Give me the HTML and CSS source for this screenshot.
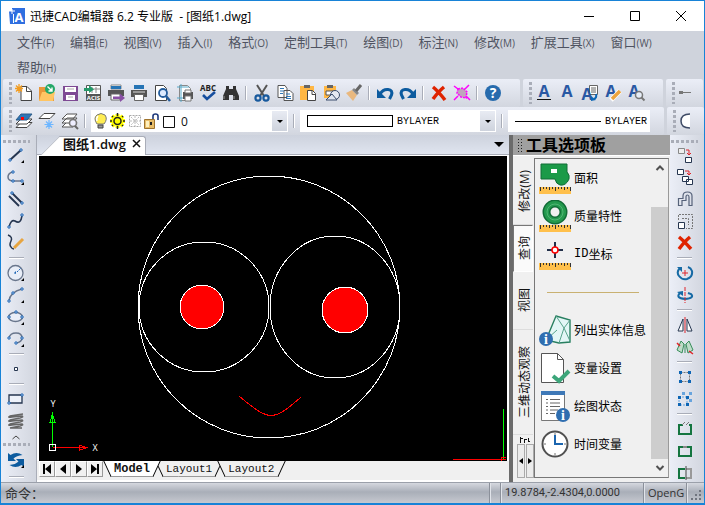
FILE: index.html
```
<!DOCTYPE html>
<html lang="zh-Hans">
<head>
<meta charset="UTF-8" />
<meta name="viewport" content="width=device-width,initial-scale=1.0" />
<title>迅捷CAD编辑器 6.2 专业版</title>
<link rel="stylesheet" href="styles.css">
</head>
<body>
  <header class="titlebar">
    <svg class="logo" viewBox="0 0 16 16"><path d="M3 0h13v16H3z" fill="#2f6fe0"/><path d="M0 3h3v13H1z" fill="#2f6fe0"/><path d="M3 1v5M0 3h6M4.500 15V6" stroke="#fff" stroke-width="1"/><text x="10" y="14" font-size="13" font-weight="700" text-anchor="middle" fill="#fff">A</text></svg>
    <h1>迅捷CAD编辑器 6.2 专业版 &nbsp;- [图纸1.dwg]</h1>
    <button class="win" aria-label="最小化"><svg viewBox="0 0 12 12"><path d="M1 6.500h10"/></svg></button>
    <button class="win" aria-label="最大化"><svg viewBox="0 0 12 12"><path d="M1.500 1.500h9v9h-9z"/></svg></button>
    <button class="win" aria-label="关闭"><svg viewBox="0 0 12 12"><path d="M1 1l10 10M11 1L1 11"/></svg></button>
  </header>

  <nav class="menubar">
    <a href="#">文件<small>(F)</small></a>
    <a href="#">编辑<small>(E)</small></a>
    <a href="#">视图<small>(V)</small></a>
    <a href="#">插入<small>(I)</small></a>
    <a href="#">格式<small>(O)</small></a>
    <a href="#">定制工具<small>(T)</small></a>
    <a href="#">绘图<small>(D)</small></a>
    <a href="#">标注<small>(N)</small></a>
    <a href="#">修改<small>(M)</small></a>
    <a href="#">扩展工具<small>(X)</small></a>
    <a href="#">窗口<small>(W)</small></a>
    <a href="#">帮助<small>(H)</small></a>
  </nav>

  <div class="toolrow">
    <div class="bar">
      <i class="grip"></i>
      <button aria-label="新建"><svg viewBox="0 0 20 20"><path d="M7 3.500h6l4.500 4.500v9.500H7z" fill="#fff" stroke="#444"/><path d="M12.500 3.500v5h5" fill="none" stroke="#444"/><path d="M5 1v9M1 5.500h8M2 2.500l6 6M8 2.500l-6 6" stroke="#f39c1f" stroke-width="1.300"/></svg></button>
      <button aria-label="打开"><svg viewBox="0 0 20 20"><path d="M2 4h6l2 2h7v12H2z" fill="#e9973a"/><path d="M5 9h13l-2 9H2z" fill="#ffc563"/><circle cx="13" cy="6" r="5" fill="#24a869"/><path d="M10.500 3.500l4.500 4.500M15 4.500V8h-3.500" fill="none" stroke="#fff" stroke-width="1.400"/></svg></button>
      <button aria-label="保存"><svg viewBox="0 0 20 20"><path d="M3 3h15v15H3z" fill="#7e4a94"/><path d="M5 4h11v5H5zM6 12h9v5H6z" fill="#fff"/><path d="M7 6h7M8 14h5" stroke="#aaa"/></svg></button>
      <button aria-label="输入"><svg viewBox="0 0 20 20"><path d="M3.500 2.500h14v15h-14z" fill="#fff" stroke="#555"/><path d="M9 4v6M13 4v6M9 6h8" stroke="#888"/><path d="M3 11h15v7H3z" fill="#555"/><text x="10.500" y="17" font-size="6" font-weight="700" text-anchor="middle" fill="#fff">ACIS</text><path d="M1 5h5V2l5 4.500L6 10V8H1z" fill="#25996a"/></svg></button>
      <button aria-label="输出"><svg viewBox="0 0 20 20"><path d="M5 2h10v4H5z" fill="#fff" stroke="#888"/><path d="M5 3h10v3H5z" fill="#2674b5"/><path d="M2 7h16v6H2z" fill="#555"/><path d="M5 11h9v6H5z" fill="#fff" stroke="#666"/><path d="M7 13.500h7v-3l5 4.500-5 4v-3H7z" fill="#8950a5"/></svg></button>
      <button aria-label="打印"><svg viewBox="0 0 20 20"><path d="M5 2h10v4H5z" fill="#2674b5"/><path d="M2 7h16v7H2z" fill="#555"/><path d="M5.500 11.500h9v6h-9z" fill="#fff" stroke="#666"/><path d="M4 9h12" stroke="#ddd"/></svg></button>
      <button aria-label="打印预览"><svg viewBox="0 0 20 20"><path d="M3.500 2.500h8l3 3v12h-11z" fill="#fff" stroke="#444"/><circle cx="11" cy="10" r="4" fill="#dceaff" stroke="#245c9c" stroke-width="1.800"/><path d="M14 13l4 5" stroke="#245c9c" stroke-width="2.500"/></svg></button>
      <button aria-label="页面设置"><svg viewBox="0 0 20 20"><path d="M4.500 2.500h8l3 3v12h-11z" fill="#fff" stroke="#888"/><path d="M6 1v18M2 4h12M2 15h8" stroke="#56a9c9"/><path d="M8 9h10v7H8z" fill="#555"/><path d="M10 7h6v3h-6zM10 13h6v5h-6z" fill="#fff" stroke="#777"/></svg></button>
      <button aria-label="拼写检查"><svg viewBox="0 0 20 20"><text x="10" y="7.500" font-size="8" font-weight="700" text-anchor="middle" fill="#222">ABC</text><path d="M5 12l4 4 8-7" fill="none" stroke="#174f9f" stroke-width="2.600"/></svg></button>
      <button aria-label="查找"><svg viewBox="0 0 20 20"><path d="M5 3h3v3h4V3h3v3l3 7v4h-6v-5H8v5H2v-4l3-7z" fill="#333"/><path d="M3 13v3M13 13v3" stroke="#999"/></svg></button>
      <i class="sep"></i>
      <button aria-label="剪切"><svg viewBox="0 0 20 20"><path d="M5 2l7 11M15 2L8 13" stroke="#555" stroke-width="2"/><g fill="none" stroke="#17599d" stroke-width="2.200"><circle cx="6" cy="15" r="2.600"/><circle cx="14" cy="15" r="2.600"/></g></svg></button>
      <button aria-label="复制"><svg viewBox="0 0 20 20"><path d="M3 2.500h7l2 3v9H3zM9 7.500h6l3 3v7H9z" fill="#fff" stroke="#555"/><path d="M5 5.500h4M5 8h4M5 10.500h3M11 11h4M11 13.500h5M11 15.500h5" stroke="#2f78b8"/></svg></button>
      <button aria-label="粘贴"><svg viewBox="0 0 20 20"><path d="M2 3h14v14H2z" fill="#ffb744"/><path d="M6 2h6v3H6z" fill="#666"/><path d="M9.500 7.500h5l3 3v7h-8z" fill="#fff" stroke="#444"/><path d="M14 7.500v4h4" fill="none" stroke="#444"/></svg></button>
      <button aria-label="粘贴为块"><svg viewBox="0 0 20 20"><path d="M3 3h12v12H3z" fill="#ffb744"/><path d="M6 2h6v3H6z" fill="#666"/><path d="M5 8h9v4H5z" fill="#fff" stroke="#555"/><circle cx="14" cy="12" r="4.500" fill="#e6eaf2" stroke="#3b4d6c"/><path d="M5 17l6-6 5 6z" fill="#dfe5ef" stroke="#3b4d6c"/></svg></button>
      <button aria-label="特性匹配"><svg viewBox="0 0 20 20"><path d="M2 10l6-3 5 5-4 6z" fill="#e9b87e"/><path d="M8 7l5 5 2-2-5-5z" fill="#888"/><path d="M12 8l5-6" stroke="#666" stroke-width="3"/></svg></button>
      <i class="sep"></i>
      <button aria-label="放弃"><svg viewBox="0 0 20 20"><path d="M5 11q3-5 8-4.500t3.500 5.500l-2 4" fill="none" stroke="#0c5b9f" stroke-width="3"/><path d="M2 6v9h9z" fill="#0c5b9f"/></svg></button>
      <button aria-label="重做"><svg viewBox="0 0 20 20"><path d="M15 11q-3-5-8-4.500t-3.500 5.500l2 4" fill="none" stroke="#0c5b9f" stroke-width="3"/><path d="M18 6v9H9z" fill="#0c5b9f"/></svg></button>
      <i class="sep"></i>
      <button aria-label="删除"><svg viewBox="0 0 20 20"><path d="M4 4q5 4 12 13M15 4q-5 4-11 12" fill="none" stroke="#df2300" stroke-width="3.500"/></svg></button>
      <button aria-label="清理"><svg viewBox="0 0 20 20"><path d="M6 6l5-1 4 4-1 6-5-1-4-4z" fill="#c0a5bd" stroke="#f0f" stroke-dasharray="2 1" stroke-width="1.500"/><path d="M2 3l4 3M17 2l-4 4M2 17l4-4M18 17l-4-4" stroke="#f0f" stroke-width="1.500"/></svg></button>
      <i class="sep"></i>
      <button aria-label="帮助"><svg viewBox="0 0 20 20"><circle cx="10" cy="10" r="8" fill="#276bad"/><text x="10" y="15" font-size="14" font-weight="700" text-anchor="middle" fill="#fff">?</text></svg></button>
    </div>
    <div class="bar">
      <i class="grip"></i>
      <button aria-label="多行文字"><svg class="letter" viewBox="0 0 20 20"><text x="10" y="14">A</text><path d="M3 16.500h14" stroke="#111"/></svg></button>
      <button aria-label="单行文字"><svg class="letter" viewBox="0 0 20 20"><text x="10" y="14">A</text></svg></button>
      <button aria-label="文字样式"><svg class="letter" viewBox="0 0 20 20"><path d="M9.500 2.500h8v9h-8z" fill="#fff" stroke="#666"/><path d="M11 5h5M11 7h5M11 9h5" stroke="#666"/><text x="7" y="17">A</text><path d="M16 11q1 4-2 5" fill="none" stroke="#0c66b4" stroke-width="2"/><path d="M11 18v-5l5 4z" fill="#0c66b4"/></svg></button>
      <button aria-label="编辑文字"><svg class="letter" viewBox="0 0 20 20"><text x="8" y="14">A</text><path d="M8 17l9-9" stroke="#fff" stroke-width="5"/><path d="M9 16l8-8" stroke="#eda43c" stroke-width="3.500"/></svg></button>
      <button aria-label="查找文字"><svg class="letter" viewBox="0 0 20 20"><text x="8" y="14">A</text><circle cx="13" cy="12" r="3.500" fill="#e6edf7" stroke="#777" stroke-width="1.500"/><path d="M15.500 14.500l3 3" stroke="#777" stroke-width="2"/></svg></button>
    </div>
    <div class="bar bar-last">
      <i class="grip"></i>
      <button aria-label="追踪点"><svg viewBox="0 0 20 20"><path d="M3 9.500h11" stroke="#777"/><path d="M2 8h4v3H2z" fill="#777"/></svg></button>
    </div>
  </div>

  <div class="toolrow">
    <div class="bar bar-wide">
      <i class="grip"></i>
      <button aria-label="图层"><svg viewBox="0 0 20 20"><path d="M7 11.500h11l-5 5H2z" fill="#fff" stroke="#444"/><path d="M7 8h11l-5 5H2z" fill="#fff" stroke="#444"/><path d="M7 3h11l-5 6H2z" fill="#2d75b6" stroke="#2d5c88"/><path d="M7 6h3v3H7z" fill="red"/></svg></button>
      <button aria-label="冻结图层"><svg viewBox="0 0 20 20"><path d="M7 2.500h11l-5 5H2z" fill="#fff" stroke="#444"/><path d="M12 9v9M7.500 13.500h9M9 10.500l6 6M15 10.500l-6 6" stroke="#6db6ff" stroke-width="1.200"/></svg></button>
      <button aria-label="图层浏览"><svg viewBox="0 0 20 20"><path d="M7 11h10l-4 5H2z" fill="#fff" stroke="#555"/><path d="M7 7h10l-4 5H2zM7 3h10l-4 5H2z" fill="#fff" stroke="#555"/><circle cx="13" cy="12" r="3.500" fill="#eef" stroke="#777" stroke-width="1.600"/><path d="M15 15l3 3" stroke="#666" stroke-width="2"/></svg></button>
      <i class="sep"></i>
      <div class="combo combo-layer">
        <svg viewBox="0 0 17 18"><path d="M5 12Q1 6 5 3q4-3 8 0 3 4-1 9z" fill="#ffed52" stroke="#777"/><path d="M6 4q-2 2-1 5" fill="none" stroke="#fff" stroke-width="1.500"/><path d="M6 13h5v3H6z" fill="#999" stroke="#444"/></svg>
        <svg viewBox="0 0 17 18"><path d="M8.500 2v14M1 9h15M3 4l11 10M14 4L3 14" stroke="#ff0" stroke-width="4"/><circle cx="8.500" cy="9" r="3.500" fill="#ff0" stroke="#222" stroke-width="1.500"/><path d="M8.500 1v3M8.500 14v3M1 9h2M14 9h2M3 4l1 1M13 13l1 1M14 4l-1 1M3 14l1-1" stroke="#222" stroke-width="1.500"/></svg>
        <svg viewBox="0 0 17 18"><path d="M3.500 3.500h11v11h-11z" fill="none" stroke="#aaa" stroke-dasharray="2 1"/><path d="M9 4v10M4 9h10M5 5l8 8M13 5l-8 8" stroke="#bbb" stroke-dasharray="2 1"/></svg>
        <svg viewBox="0 0 17 18"><path d="M10 8V4q0-2 2.500-2T15 4v4" fill="none" stroke="#1e397a" stroke-width="1.600"/><path d="M1.500 7.500h10v9h-10z" fill="#e8bd69" stroke="#9e732e"/><path d="M3 9h3v6H3z" fill="#fff0bd"/><path d="M8 10v3" stroke="#222" stroke-width="2"/></svg>
        <svg viewBox="0 0 17 18"><path d="M3.500 4.500h11v11h-11z" fill="#fff" stroke="#111"/></svg>
        <select aria-label="当前图层"><option>0</option></select>
        <span class="arrow"></span>
      </div>
      <i class="sep"></i>
      <div class="combo">
        <span class="swatch"></span>
        <select class="mono" aria-label="颜色"><option>BYLAYER</option></select>
        <span class="arrow"></span>
      </div>
      <i class="sep"></i>
      <div class="combo combo-line">
        <span class="linetype"></span>
        <select class="mono" aria-label="线型"><option>BYLAYER</option></select>
      </div>
    </div>
    <div class="bar bar-last">
      <i class="grip"></i>
      <button aria-label="圆弧"><svg viewBox="0 0 20 20"><path d="M12 3q-9 0-9 7t9 7z" fill="#fff"/><path d="M12 3q-9 0-9 7t9 7" fill="none" stroke="#3e4b66" stroke-width="1.500"/></svg></button>
    </div>
  </div>

  <main class="work">
    <div class="side">
      <i class="grip-h"></i>
      <button aria-label="直线"><svg viewBox="0 0 20 20"><path d="M4 15L15 5" stroke="#263650" stroke-width="2"/><path class="node" d="M3 14h2v2H3zM14 4h2v2h-2z"/><path d="M18 15v3h-3z"/></svg></button>
      <button aria-label="多段线"><svg viewBox="0 0 20 20"><path d="M7 5q-5 1-5 5t6 4h7" fill="none" stroke="#69768c" stroke-width="1.500"/><path class="node" d="M6 4h2v2H6zM6 13h2v2H6zM15 13h2v2h-2z"/><path d="M18 15v3h-3z"/></svg></button>
      <button aria-label="多线"><svg viewBox="0 0 20 20"><path d="M3 7l10 10M6 4l10 10" stroke="#263650" stroke-width="1.800"/><path class="node" d="M5 3h2v2H5zM15 13h2v2h-2z"/></svg></button>
      <button aria-label="样条曲线"><svg viewBox="0 0 20 20"><path d="M3 16q2-8 6-6 6 4 7-6" fill="none" stroke="#263650" stroke-width="1.600"/><path class="node" d="M2 15h2v2H2zM15 3h2v2h-2z"/></svg></button>
      <button aria-label="徒手画"><svg viewBox="0 0 20 20"><path d="M2 2q5 2 3 6t0 6q1 2 3 2" fill="none" stroke="#263650" stroke-width="1.500"/><path d="M8 15l9-9" stroke="#e7a541" stroke-width="3"/></svg></button>
      <i class="sep-h"></i>
      <button aria-label="圆"><svg viewBox="0 0 20 20"><circle cx="9.500" cy="10" r="7.500" fill="#e9eef8" stroke="#69768c" stroke-width="1.300"/><path d="M8 10h3M9.500 8.500v3M11 9l4-4" stroke="#1d65b5" stroke-dasharray="2 1"/><path d="M18 15v3h-3z"/></svg></button>
      <button aria-label="圆弧"><svg viewBox="0 0 20 20"><path d="M3 16q1-9 13-12" fill="none" stroke="#69768c" stroke-width="1.500"/><path class="node" d="M2 15h2v2H2zM6 7h2v2H6zM15 3h2v2h-2z"/><path d="M18 15v3h-3z"/></svg></button>
      <button aria-label="椭圆"><svg viewBox="0 0 20 20"><ellipse cx="9.500" cy="10" rx="7" ry="4.500" fill="#e9eef8" stroke="#69768c" stroke-width="1.500"/><path class="node" d="M2 9h2v2H2zM9 4h2v2H9zM15 9h2v2h-2z"/><path d="M18 15v3h-3z"/></svg></button>
      <button aria-label="椭圆弧"><svg viewBox="0 0 20 20"><path d="M3 9q1-5 7-5t6 5q0 4-6 5" fill="none" stroke="#69768c" stroke-width="1.500"/><path class="node" d="M2 8h2v2H2zM15 8h2v2h-2zM9 13h2v2H9z"/><path d="M18 15v3h-3z"/></svg></button>
      <i class="sep-h"></i>
      <button aria-label="点"><svg viewBox="0 0 20 20"><path d="M8.500 8.500h3v3h-3z" fill="#fff" stroke="#263650"/></svg></button>
      <i class="sep-h"></i>
      <button aria-label="矩形"><svg viewBox="0 0 20 20"><path d="M3 6h13v8H3z" fill="#eef2fa" stroke="#263650" stroke-width="1.300"/><path class="node" d="M2 13h2v2H2zM15 5h2v2h-2z"/></svg></button>
      <button aria-label="螺旋"><svg viewBox="0 0 20 20"><path d="M17 3L4 5q-3 2 2 1l10-1q2 1-2 2L4 9q-3 2 2 1l10-1q2 1-2 2L4 13q-3 2 2 1l10-1q2 1-2 2L4 17l12 0" fill="none" stroke="#666" stroke-width="1.500"/></svg></button>
      <button class="more" aria-label="更多"><svg viewBox="0 0 20 10"><path d="M6.500 7L10 4l3.500 3" fill="none" stroke="#444"/></svg></button>
      <i class="grip-h"></i>
      <button class="regen" aria-label="重生成"><svg viewBox="0 0 20 20"><path d="M2 3v8h8L7.500 8.500q3-3 9-3.500-6-4-12 0z" fill="#0c5b9f"/><path d="M18 17V9h-8l2.500 2.500q-3 3-9 3.500 6 4 12 0z" fill="#0c5b9f"/><path d="M18 15v3h-3z"/></svg></button>
      <i class="sep-h"></i>
    </div>

    <section class="doc">
      <div class="doctabs">
        <button class="doctab">图纸1.dwg<svg viewBox="0 0 10 10"><path d="M1 1l7 7M8 1L1 8" stroke="#111" stroke-width="1.500"/></svg></button>
        <button class="doclist" aria-label="图纸列表"><span></span></button>
      </div>
      <div class="canvas">
        <svg class="drawing">
          <g fill="none" stroke="#fff">
            <circle cx="230" cy="151" r="131"/>
            <circle cx="165" cy="151" r="65"/>
            <ellipse cx="296" cy="151" rx="65" ry="71"/>
            <circle cx="163" cy="151" r="22" fill="red"/>
            <circle cx="306" cy="154" r="23" fill="red"/>
          </g>
          <path d="M200 240Q213 251 221 256 233 263 243 256 251 251 262 241" fill="none" stroke="red"/>
          <!-- UCS icon -->
          <path d="M13.500 291v-33M11 266l2.500-8 2.500 8z" fill="none" stroke="#0f0"/>
          <path d="M14 291.500h34M40 289l8 2.500-8 3z" fill="none" stroke="red"/>
          <path d="M10.500 288.500h6v6h-6z" fill="none" stroke="#fff"/>
          <text x="14" y="251" font-size="9" text-anchor="middle" fill="#fff">Y</text>
          <text x="56" y="295" font-size="9" text-anchor="middle" fill="#fff">X</text>
          <!-- crosshair -->
          <path d="M464.500 253v51" stroke="#0f0"/>
          <path d="M414 303.500h53M462 301h5M462 301v4" fill="none" stroke="red"/>
        </svg>
      </div>
      <div class="sheets">
        <button class="nav" aria-label="第一个"><svg viewBox="0 0 12 12"><path d="M2 1h2v10H2zM10 1v10L4 6z"/></svg></button>
        <button class="nav" aria-label="上一个"><svg viewBox="0 0 12 12"><path d="M9 1v10L3 6z"/></svg></button>
        <button class="nav" aria-label="下一个"><svg viewBox="0 0 12 12"><path d="M3 1v10l6-5z"/></svg></button>
        <button class="nav" aria-label="最后一个"><svg viewBox="0 0 12 12"><path d="M2 1v10l6-5zM8 1h2v10H8z"/></svg></button>
        <button class="sheet on">Model</button>
        <button class="sheet">Layout1</button>
        <button class="sheet">Layout2</button>
      </div>
    </section>

    <aside class="palette">
      <h2><i class="dots"></i>工具选项板</h2>
      <div class="palette-body">
        <div class="vtabs">
          <button class="vtab t1"><span>修改(M)</span></button>
          <button class="vtab t2 on"><span>查询</span></button>
          <button class="vtab t3"><span>视图</span></button>
          <button class="vtab t4"><span>三维动态观察</span></button>
          <button class="vtab rest" aria-label="编辑"><svg viewBox="0 0 12 6"><path d="M1.500 0v6M1 1.500h3M5.500 2v4M5 2.500h3M9.500 1v3M9 4.500h2" fill="none" stroke="#111"/></svg></button>
          <div class="vscroll">
            <button aria-label="前移"><svg viewBox="0 0 6 8"><path d="M5 1v6L1 4z"/></svg></button>
            <button aria-label="后移"><svg viewBox="0 0 6 8"><path d="M1 1v6l4-3z"/></svg></button>
          </div>
        </div>
        <div class="list">
          <div class="items">
            <button class="item"><svg viewBox="0 0 32 32"><path d="M2 2h26v8q3 3 2 7-3 7-9 6-4-1-5-6H2z" fill="#1b9a48" stroke="#126c37"/><path d="M12 7h6v4h-6z" fill="#fff"/><path d="M0 25h32v7H0z" fill="#ffc04c"/><path d="M1.500 25v4M4.500 25v2M7.500 25v2M10.500 25v3M13.500 25v2M16.500 25v4M19.500 25v2M22.500 25v2M25.500 25v3M28.500 25v2M31.500 25v4" stroke="#333"/></svg>面积</button>
            <button class="item"><svg viewBox="0 0 32 32"><circle cx="16" cy="12" r="8.500" fill="none" stroke="#126c37" stroke-width="8"/><circle cx="16" cy="12" r="8.500" fill="none" stroke="#249a4e" stroke-width="5"/><circle cx="16" cy="12" r="8" fill="none" stroke="#52b575" stroke-width="1"/><path d="M0 25h32v7H0z" fill="#ffc04c"/><path d="M1.500 25v4M4.500 25v2M7.500 25v2M10.500 25v3M13.500 25v2M16.500 25v4M19.500 25v2M22.500 25v2M25.500 25v3M28.500 25v2M31.500 25v4" stroke="#333"/></svg>质量特性</button>
            <button class="item"><svg viewBox="0 0 32 32"><path d="M16 4v16M8 12h16" stroke="#222f49" stroke-width="2"/><circle cx="16" cy="12" r="3" fill="#fff" stroke="red" stroke-width="1.500"/><path d="M0 25h32v7H0z" fill="#ffc04c"/><path d="M1.500 25v4M4.500 25v2M7.500 25v2M10.500 25v3M13.500 25v2M16.500 25v4M19.500 25v2M22.500 25v2M25.500 25v3M28.500 25v2M31.500 25v4" stroke="#333"/></svg><b>ID</b>坐标</button>
            <hr>
            <button class="item"><svg viewBox="0 0 32 32"><path d="M17 2l14 4v22l-11 1-13-3z" fill="#e3f6f6" stroke="#287f60" stroke-width="1.400"/><path d="M17 2l8 12 6-8M25 14l-5 15M25 14l6 13M8 25l10-9" fill="none" stroke="#59a38c"/><circle cx="7" cy="25" r="7" fill="#2f6eb0"/><text class="info" x="7" y="30">i</text></svg>列出实体信息</button>
            <button class="item"><svg viewBox="0 0 32 32"><path d="M2.500 1.500h16l6 6v23h-22z" fill="#fff" stroke="#555"/><path d="M18.500 1.500v6h6" fill="none" stroke="#555"/><path d="M14 24l6 5 10-10" fill="none" stroke="#3ca67a" stroke-width="4"/></svg>变量设置</button>
            <button class="item"><svg viewBox="0 0 32 32"><path d="M2.500 2.500h23v28h-23z" fill="#fff" stroke="#777"/><path d="M2 1h24v4H2z" fill="#3e78b7"/><path d="M7 9.500h2M11 9.500h10M7 13h2M11 13h10M7 16.500h2M11 16.500h10M7 20h2M11 20h8M7 23.500h2M11 23.500h5" stroke="#666"/><circle cx="24" cy="25" r="7" fill="#2f6eb0"/><text class="info" x="24" y="30">i</text></svg>绘图状态</button>
            <button class="item"><svg viewBox="0 0 32 32"><circle cx="16" cy="16" r="12.500" fill="#fff" stroke="#505050" stroke-width="2"/><path d="M16 7v9h8" fill="none" stroke="#1b65af" stroke-width="2"/><path d="M16 5v2M27 16h-2M16 27v-2M5 16h2" stroke="#777"/></svg>时间变量</button>
          </div>
          <div class="scroll">
            <button aria-label="向上"><svg viewBox="0 0 10 10"><path d="M1.500 7L5 3.500 8.500 7" fill="none" stroke="#505050" stroke-width="2"/></svg></button>
            <span class="thumb"></span>
            <button aria-label="向下"><svg viewBox="0 0 10 10"><path d="M1.500 3L5 6.500 8.500 3" fill="none" stroke="#505050" stroke-width="2"/></svg></button>
          </div>
        </div>
      </div>
    </aside>

    <div class="side side-right">
      <i class="grip-h"></i>
      <button aria-label="复制"><svg viewBox="0 0 20 20"><path d="M3.500 3.500h6v5h-6z" fill="#eee" stroke="#888"/><path d="M10.500 12.500h6v5h-6z" fill="#fff" stroke="#263650"/><path d="M11 5h3v5M12 8l2 2 2-2" fill="none" stroke="#e0252a"/></svg></button>
      <button aria-label="多重复制"><svg viewBox="0 0 20 20"><path d="M2.500 2.500h6v5h-6zM7.500 9.500h6v5h-6zM11.500 12.500h6v5h-6z" fill="#fff" stroke="#263650"/><path d="M10 4h4v4M12 6l2 2 2-2" fill="none" stroke="#e0252a"/></svg></button>
      <button aria-label="偏移"><svg viewBox="0 0 20 20"><path d="M3.500 10V17M3 16.500h4v-5h4V8q0-2 1.500-2T14 8v8.500h3V7q0-4-4.500-4T8 7v2.500H3.500V12" fill="none" stroke="#56627a" stroke-width="1.200"/></svg></button>
      <button aria-label="缩放"><svg viewBox="0 0 20 20"><path d="M3.500 9V3.500h14v14H11" fill="none" stroke="#777" stroke-dasharray="2 1"/><path d="M7 7.500h6.500V14" fill="none" stroke="#777" stroke-dasharray="2 1"/><path d="M3.500 11.500h6v6h-6z" fill="#fff" stroke="#263650"/></svg></button>
      <button aria-label="删除"><svg viewBox="0 0 20 20"><path d="M4 4q5 4 12 12M15 4q-5 4-11 12" fill="none" stroke="#df2300" stroke-width="3.500"/></svg></button>
      <i class="sep-h"></i>
      <button aria-label="旋转"><svg viewBox="0 0 20 20"><path d="M5 5q-4 4-1 8 3 4 8 3 6-2 5-8-1-3-4-4" fill="none" stroke="#166aa5" stroke-width="2"/><path d="M2 4h5v5z" fill="#166aa5"/><path d="M10 7v6M7 10h6" stroke="#e0252a"/></svg></button>
      <button aria-label="三维旋转"><svg viewBox="0 0 20 20"><path d="M5 8q-5 5 5 6 10-1 6-5l-3-1" fill="none" stroke="#166aa5" stroke-width="2"/><path d="M2 7l6-1v5z" fill="#166aa5"/><path d="M10 2v16" stroke="#e0252a" stroke-dasharray="4 1"/></svg></button>
      <i class="sep-h"></i>
      <button aria-label="镜像"><svg viewBox="0 0 20 20"><path d="M8 4v12H3zM12 4v12h5z" fill="#fff" stroke="#263650"/><path d="M10 2v16" stroke="#e0252a"/></svg></button>
      <button aria-label="三维镜像"><svg viewBox="0 0 20 20"><path d="M6 4l3 3-2 9-5-3zM14 4l-3 3 2 9 5-3z" fill="#bedcc9" stroke="#378e5b"/><path d="M10 7v9" stroke="#378e5b"/><path d="M2 6l3 3M14 14l4 3" stroke="#e0252a" stroke-width="1.500"/></svg></button>
      <i class="sep-h"></i>
      <button aria-label="矩形阵列"><svg viewBox="0 0 20 20"><path d="M5.500 5.500h9v9h-9z" fill="none" stroke="#777" stroke-dasharray="2 1"/><path d="M4 4h3v3H4zM13 4h3v3h-3zM4 13h3v3H4zM13 13h3v3h-3z" fill="#0d65b5"/></svg></button>
      <button aria-label="三维阵列"><svg viewBox="0 0 20 20"><path d="M7 3h3v3H7zM14 3h3v3h-3zM14 10h3v3h-3z" fill="#68a4dd"/><path d="M4 8h8v8H4z" fill="none" stroke="#68a4dd" stroke-dasharray="2 1"/><path d="M3 7h3v3H3zM11 7h3v3h-3zM3 14h3v3H3zM11 14h3v3h-3z" fill="#0d65b5"/></svg></button>
      <i class="sep-h"></i>
      <button aria-label="打断"><svg viewBox="0 0 20 20"><path d="M8 6H4v9h12V6h-2" fill="none" stroke="#147540" stroke-width="2"/><path d="M7 6l3-3M11 6l3-3" stroke="#777"/></svg></button>
      <button aria-label="合并"><svg viewBox="0 0 20 20"><path d="M4 6h12v9H4z" fill="none" stroke="#147540" stroke-width="2"/><path d="M8 6h4" stroke="#888" stroke-width="2"/></svg></button>
      <button aria-label="修剪"><svg viewBox="0 0 20 20"><path d="M11 6h5v9h-5" fill="none" stroke="#999" stroke-width="2"/><path d="M10 6H4v9h6" fill="none" stroke="#147540" stroke-width="2"/><path d="M11 3v14" stroke="#444"/></svg></button>
    </div>
  </main>

  <footer class="status">
    <label for="cmd">命令：</label>
    <input id="cmd" type="text">
    <span class="cell gap"></span>
    <span class="cell coords">19.8784,-2.4304,0.0000</span>
    <span class="cell render">OpenG</span>
    <span class="cell corner"><svg viewBox="0 0 12 12"><path d="M9 1h2v2H9zM5 5h2v2H5zM9 5h2v2H9zM1 9h2v2H1zM5 9h2v2H5zM9 9h2v2H9z" fill="#70757f"/></svg></span>
  </footer>
</body>
</html>
```
FILE: styles.css
```
* { box-sizing:border-box; }
body { margin:0; height:100vh; min-height:500px; display:flex; flex-direction:column; border:1px solid #1883d7; border-bottom-width:2px; background:#cfd3dc; font-family:"Open Sans", "Noto Sans CJK SC", sans-serif; font-size:12px; color:#111; }
button { display:grid; place-items:center; flex:none; padding:0; border:0; background:none; font:inherit; color:inherit; cursor:pointer; }
svg { display:block; }
i { flex:none; }

/* title + menu */
.titlebar { display:flex; align-items:center; height:30px; padding:0 0 0 8px; background:#fff; }
.logo { width:16px; height:16px; margin-right:5px; }
h1 { flex:1; margin:0; font-size:12px; font-weight:400; color:#000; }
.win { width:46px; height:28px; }
.win svg { width:12px; height:12px; fill:none; stroke:#000; }
.menubar { display:flex; flex-wrap:wrap; gap:2px 16px; padding:0 16px; }
.menubar a { height:23px; line-height:23px; font-size:13px; color:#4f5361; text-decoration:none; }
.menubar small { font-size:10px; }

/* toolbars */
.toolrow { display:flex; gap:3px; height:28px; padding:0 0 0 2px; }
.bar { display:flex; align-items:center; flex:none; padding:0 16px 0 6px; background:linear-gradient(#ebeef7, #d2d6df); border-radius:2px; }
.bar-wide { flex:1; min-width:0; padding-right:14px; }
.bar-last { width:37px; padding-right:0; }
.bar button { width:23px; height:24px; }
.bar button svg { width:20px; height:20px; }
.letter text { font-size:16px; font-weight:700; text-anchor:middle; fill:#2958a3; }
.grip { width:3px; height:22px; background:repeating-linear-gradient(#a9adb8 0 3px, transparent 3px 5px); }
.sep { width:8px; height:14px; background:linear-gradient(90deg, transparent 3px, #a9adb8 3px 4px, #fff 4px 5px, transparent 5px); }
.combo { display:flex; align-items:center; flex:196 1 0; min-width:0; height:22px; margin:0 2px; background:#fff; }
.combo-line { flex-grow:142; margin-right:0; }
.combo-layer { padding-left:1px; }
.combo svg { width:17px; height:18px; flex:none; }
.combo select { flex:1; min-width:0; height:20px; padding:0 0 0 4px; border:0; background:none; appearance:none; font:inherit; color:#111; }
.combo select.mono { font-family:"Liberation Mono", monospace; font-size:10px; color:#000; }
.swatch { flex:none; width:86px; height:12px; margin-left:7px; border:1px solid #000; }
.linetype { flex:none; width:86px; height:1px; margin-left:7px; background:#000; }
.arrow { display:grid; place-items:center; flex:none; width:15px; height:20px; margin-right:1px; background:linear-gradient(#e8ebf3, #ced3dd); }
.arrow::after { content:""; border:3px solid transparent; border-top-color:#000; border-bottom:0; }

/* work area */
.work { display:flex; flex:1; min-height:0; }
.side { display:flex; flex-direction:column; align-items:center; flex:none; width:35px; padding:4px 5px 0 0; overflow:hidden; background:linear-gradient(90deg, #ebeef7, #d2d6df); }
.side-right { width:34px; }
.side button { width:23px; height:22px; }
.side svg { width:20px; height:20px; }
.side .more { height:10px; }
.side .more svg { height:10px; }
.side .regen { height:26px; }
.grip-h { width:27px; height:3px; margin:1px 0; background:repeating-linear-gradient(90deg, #a9adb8 0 3px, transparent 3px 5px); }
.sep-h { width:15px; height:8px; background:linear-gradient(transparent 3px, #a9adb8 3px 4px, #fff 4px 5px, transparent 5px); }
.node { fill:#fff; stroke:#1d65b5; }

.doc { display:flex; flex:1; flex-direction:column; min-width:0; padding-bottom:2px; border-left:1px solid #a9adb8; background:#fff; }
.doctabs { display:flex; justify-content:space-between; flex:none; height:20px; padding-left:3px; border-bottom:1px solid #a9adb8; background:linear-gradient(#cdd2dd, #dfe4ef); }
.doctab { position:relative; z-index:0; display:flex; align-items:center; gap:6px; height:19px; padding:0 4px 2px 23px; font-size:13px; font-weight:600; color:#111; }
.doctab::before { content:""; position:absolute; z-index:-1; inset:1px 0 -1px 10px; border:1px solid #a9adb8; border-width:1px 0 0 1px; background:#fff; transform:skewX(-45deg); clip-path:inset(0 20px 0 0); }
.doctab::after { content:""; position:absolute; z-index:-1; inset:1px 0 -1px 30px; border:1px solid #a9adb8; border-width:1px 1px 0 0; border-radius:0 3px 0 0; background:#fff; }
.doctab svg { width:10px; height:10px; }
.doclist { width:21px; }
.doclist span { border:5px solid transparent; border-top-color:#000; border-bottom:0; }
.canvas { flex:1; min-height:0; margin:1px 2px 0; background:#000; overflow:hidden; }
.drawing { width:100%; height:100%; shape-rendering:crispEdges; }
.sheets { display:flex; align-items:flex-start; flex:none; height:19px; padding-left:2px; background:#f0f0f0; font-family:"Liberation Mono", monospace; }
.nav { width:16px; height:16px; border:1px solid; border-color:#fff #999 #999 #fff; background:#f0f0f0; }
.nav svg { width:12px; height:12px; }
.sheet { position:relative; isolation:isolate; height:16px; margin-left:-6px; padding:0 11px; font-size:11px; }
.sheet.on { z-index:1; margin-left:0; font-size:12px; font-weight:700; }
.sheet::before, .sheet::after { content:""; position:absolute; z-index:-1; top:0; bottom:0; border-bottom:1px solid #999; background:#f0f0f0; }
.sheet::before { left:4px; right:50%; border-left:1px solid #000; transform:skewX(25deg); }
.sheet::after { left:40%; right:4px; border-right:1px solid #000; transform:skewX(-25deg); }
.sheet.on::before, .sheet.on::after { background:#fff; }

/* palette */
.palette { display:flex; flex-direction:column; flex:none; width:161px; border-left:4px solid #6b6b6b; background:#f0f0f0; }
h2 { display:flex; align-items:center; flex:none; gap:4px; height:20px; margin:0; padding-left:4px; background:#a0a0a0; font-size:16px; line-height:20px; font-weight:700; color:#000; }
.dots { width:5px; height:14px; background:radial-gradient(#222 40%, transparent 45%) 0 0 / 3px 3px; }
.palette-body { display:flex; flex:1; min-height:0; padding:2px 1px 4px 0; border-top:1px solid #fff; }
.vtabs { display:flex; flex-direction:column; flex:none; width:21px; }
.vtab { width:20px; padding-left:3px; border-bottom:1px solid #ddd; }
.vtab span { writing-mode:vertical-rl; text-orientation:sideways; transform:rotate(180deg); line-height:16px; white-space:nowrap; }
.t1 { height:67px; }
.t2 { height:47px; }
.t3 { height:58px; }
.t4 { height:105px; }
.vtab.on { border:1px solid; border-color:#777 #fff #fff #777; background:#fafafa; }
.vtab.rest { flex:1; min-height:0; border:0; place-items:center; }
.vtab.rest svg { width:12px; height:6px; }
.vscroll { display:flex; flex:none; gap:1px; height:34px; margin-left:4px; }
.vscroll button { width:8px; border:1px solid #aaa; background:#ececec; }
.vscroll svg { width:6px; height:8px; }
.list { display:flex; flex:1; min-width:0; border:1px solid #777; border-right-color:#999; overflow:hidden; }
.items { flex:1; min-width:0; padding-left:4px; }
.item { display:flex; align-items:center; gap:3px; width:100%; height:38px; font-size:12px; white-space:nowrap; color:#000; }
.item svg { flex:none; width:32px; height:32px; }
.item b { margin-right:-3px; font-family:"Liberation Mono", monospace; font-weight:400; }
.info { font-family:"Liberation Serif", serif; font-size:14px; font-weight:700; text-anchor:middle; fill:#fff; }
hr { height:1px; margin:19px 12px 18px 8px; border:0; background:#c9b171; }
.scroll { display:flex; flex-direction:column; flex:none; width:17px; }
.scroll button { height:18px; }
.scroll svg { width:10px; height:10px; }
.thumb { flex:1; margin-top:30px; background:#cdcdcd; }

/* status bar */
.status { display:flex; flex:none; height:21px; border-top:1px solid #9ba0aa; background:linear-gradient(#d5d8df, #a9aeb8 45%, #c6c9d0); line-height:20px; color:#333; }
.status label { padding-left:4px; font-size:13px; }
.status input { flex:1; min-width:0; padding:0 4px; border:0; outline:0; background:none; font:inherit; }
.cell { border-left:1px solid #8b909a; box-shadow:inset 1px 0 #e1e4ea; }
.gap { width:11px; }
.coords { width:143px; padding-left:4px; font-family:Roboto, sans-serif; font-size:11px; }
.render { width:43px; padding-left:4px; font-size:11px; }
.corner { display:grid; place-items:end; width:18px; padding:2px; }
.corner svg { width:12px; height:12px; }
```
